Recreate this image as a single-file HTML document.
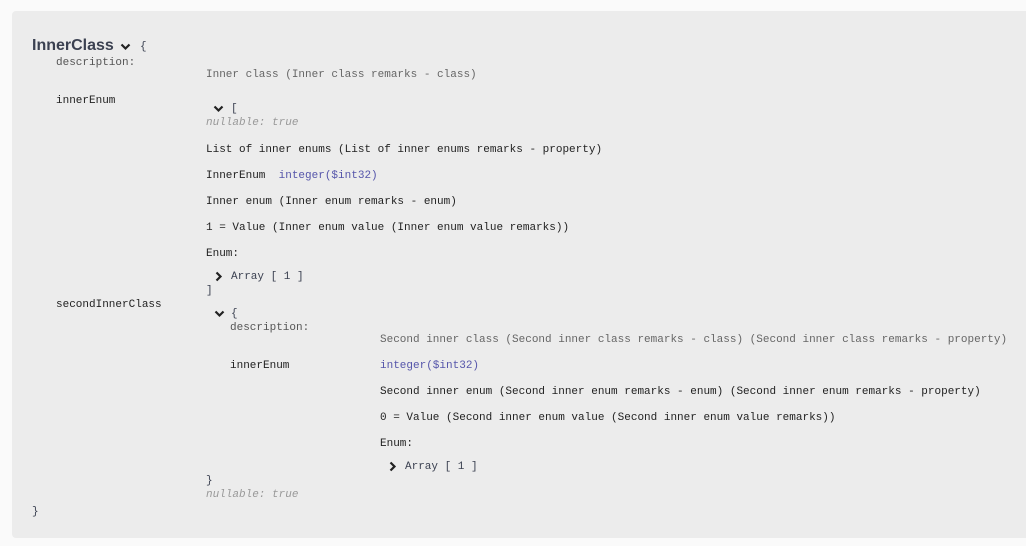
<!DOCTYPE html>
<html><head><meta charset="utf-8"><style>
body{margin:0;background:#fafafa;width:1026px;height:546px;overflow:hidden;position:relative}
.panel{position:absolute;left:12px;top:11px;width:1030px;height:527px;background:#ececec;border-radius:4px}
.t{position:absolute;font-family:"Liberation Mono",monospace;font-size:11px;line-height:14px;white-space:pre;color:#222;font-weight:400;margin-top:1px}
.g{color:#666;font-weight:400}
.n{color:#999;font-style:italic;font-weight:400}
.p{color:#55a;font-weight:400}
.b{color:#3b4151;font-weight:400}
.h{position:absolute;left:32px;top:37px;font-family:"Liberation Sans",sans-serif;font-size:16px;font-weight:bold;color:#3b4151}
svg{position:absolute}
</style></head><body>
<div class="panel"></div>
<div class="h">InnerClass</div>
<svg style="left:120px;top:43px" width="11" height="8" viewBox="0 0 11 8"><path d="M1.5 1.5 L5.5 5.5 L9.5 1.5" stroke="#222" stroke-width="2.2" fill="none"/></svg>
<div class="t b" style="left:140px;top:39px">{</div>
<div class="t" style="left:56px;top:55px;color:#555">description:</div>
<div class="t g" style="left:206px;top:67px">Inner class (Inner class remarks - class)</div>
<div class="t" style="left:56px;top:93px">innerEnum</div>
<svg style="left:213px;top:105px" width="11" height="8" viewBox="0 0 11 8"><path d="M1.5 1.5 L5.5 5.5 L9.5 1.5" stroke="#222" stroke-width="2.2" fill="none"/></svg>
<div class="t b" style="left:231px;top:101px">[</div>
<div class="t n" style="left:206px;top:115px">nullable: true</div>
<div class="t" style="left:206px;top:142px">List of inner enums (List of inner enums remarks - property)</div>
<div class="t" style="left:206px;top:168px">InnerEnum  <span class="p">integer($int32)</span></div>
<div class="t" style="left:206px;top:194px">Inner enum (Inner enum remarks - enum)</div>
<div class="t" style="left:206px;top:220px">1 = Value (Inner enum value (Inner enum value remarks))</div>
<div class="t" style="left:206px;top:246px">Enum:</div>
<svg style="left:215px;top:271px" width="8" height="11" viewBox="0 0 8 11"><path d="M1.5 1.5 L5.5 5.5 L1.5 9.5" stroke="#222" stroke-width="2.2" fill="none"/></svg>
<div class="t b" style="left:231px;top:269px">Array [ 1 ]</div>
<div class="t b" style="left:206px;top:283px">]</div>
<div class="t" style="left:56px;top:297px">secondInnerClass</div>
<svg style="left:214px;top:310px" width="11" height="8" viewBox="0 0 11 8"><path d="M1.5 1.5 L5.5 5.5 L9.5 1.5" stroke="#222" stroke-width="2.2" fill="none"/></svg>
<div class="t b" style="left:231px;top:306px">{</div>
<div class="t" style="left:230px;top:320px;color:#555">description:</div>
<div class="t g" style="left:380px;top:332px">Second inner class (Second inner class remarks - class) (Second inner class remarks - property)</div>
<div class="t" style="left:230px;top:358px">innerEnum</div>
<div class="t p" style="left:380px;top:358px">integer($int32)</div>
<div class="t" style="left:380px;top:384px">Second inner enum (Second inner enum remarks - enum) (Second inner enum remarks - property)</div>
<div class="t" style="left:380px;top:410px">0 = Value (Second inner enum value (Second inner enum value remarks))</div>
<div class="t" style="left:380px;top:436px">Enum:</div>
<svg style="left:389px;top:461px" width="8" height="11" viewBox="0 0 8 11"><path d="M1.5 1.5 L5.5 5.5 L1.5 9.5" stroke="#222" stroke-width="2.2" fill="none"/></svg>
<div class="t b" style="left:405px;top:459px">Array [ 1 ]</div>
<div class="t b" style="left:206px;top:473px">}</div>
<div class="t n" style="left:206px;top:487px">nullable: true</div>
<div class="t b" style="left:32px;top:504px">}</div>
</body></html>
